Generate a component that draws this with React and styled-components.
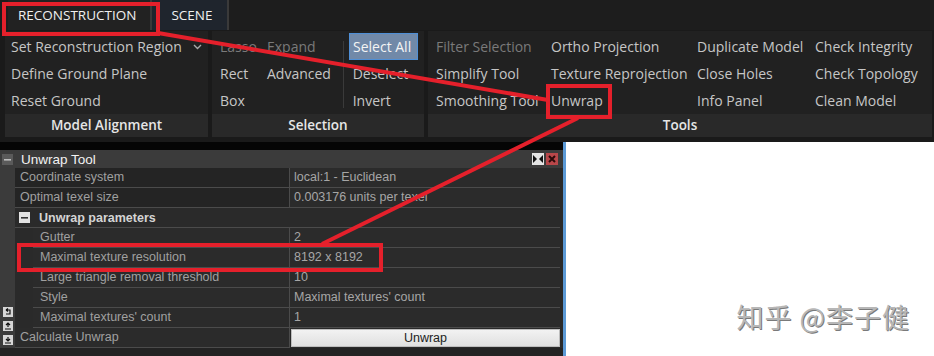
import React from "react";
import styled, { createGlobalStyle, css } from "styled-components";

const GlobalStyle = createGlobalStyle`
  html, body { margin: 0; padding: 0; background: #ffffff; }
  #root { width: 934px; height: 356px; }
`;

const Page = styled.div`
  position: relative;
  width: 934px;
  height: 356px;
  overflow: hidden;
  display: flex;
  flex-direction: column;
  background: #1b1b1b;
  font-family: "Open Sans", "Noto Sans", sans-serif;
`;

// ribbon

const Ribbon = styled.div`
  height: 142px;
  display: flex;
  flex-direction: column;
  background: #1a1a1a;
`;

const TabBar = styled.div`
  height: 30px;
  display: flex;
  padding-left: 8px;
  background: #1d1d1d;
`;

const Tab = styled.div`
  height: 30px;
  line-height: 30px;
  color: #f0f0f0;
  font-size: 13.5px;
  border-right: 2px solid #3a3a3a;
  ${(p) =>
    p.$active
      ? css`
          padding: 0 14px 0 10px;
          background: #222222;
        `
      : css`
          padding: 0 15px 0 19px;
          background: #1f252d;
        `}
`;

const Panels = styled.div`
  height: 106px;
  display: flex;
  gap: 4px;
  padding: 1px 0 0 5px;
`;

const Panel = styled.div`
  width: ${(p) => p.$w}px;
  display: flex;
  flex-direction: column;
  background: #212121;
`;

const PanelBody = styled.div`
  flex: 1;
  display: flex;
  padding: 2px 0 0 ${(p) => p.$pad || 6}px;
`;

const Column = styled.div`
  display: flex;
  flex-direction: column;
  width: ${(p) => (p.$w ? `${p.$w}px` : "auto")};
`;

const Item = styled.div`
  height: 27px;
  line-height: 27px;
  font-size: 14px;
  white-space: nowrap;
  color: ${(p) => (p.$dim ? "#7a7a7a" : "#c6c6c6")};
  display: flex;
  align-items: center;
  gap: 11px;
`;

const SelectAll = styled.div`
  height: 27px;
  box-sizing: border-box;
  line-height: 25px;
  padding: 0 3px;
  width: 69px;
  font-size: 14px;
  color: #f4f4f4;
  background: #7189a8;
  border: 1px solid #4f8fd6;
  white-space: nowrap;
`;

const Divider = styled.div`
  width: 1px;
  margin: 8px 5px 6px 0;
  background: #3a3a3a;
`;

const PanelLabel = styled.div`
  height: 23px;
  line-height: 23px;
  text-align: center;
  background: #292929;
  color: #e6e6e6;
  font-size: 13.5px;
  font-weight: 600;
`;

// lower part

const Lower = styled.div`
  flex: 1;
  display: flex;
`;

const Dock = styled.div`
  width: 563px;
  display: flex;
  flex-direction: column;
  border-top: 8px solid #050505;
  background: #232323;
`;

const DockBody = styled.div`
  display: flex;
  height: 198px;
`;

const Gutter = styled.div`
  width: 15px;
  background: #3b3b3b;
  display: flex;
  flex-direction: column;
  justify-content: space-between;
  align-items: center;
  padding: 4px 0 3px;
  box-sizing: border-box;
`;

const GutterIcons = styled.div`
  display: flex;
  flex-direction: column;
  gap: 4px;
`;

const Grid = styled.div`
  flex: 1;
  display: flex;
  flex-direction: column;
  padding-right: 3px;
  background: #2a2a2a;
  font-family: "Liberation Sans", Arial, sans-serif;
  font-size: 12.5px;
`;

const TitleBar = styled.div`
  height: 18px;
  margin-right: -3px;
  display: flex;
  align-items: center;
  justify-content: space-between;
  background: #3b3b3b;
  padding: 0 5px 0 6px;
  color: #f2f2f2;
  font-size: 13.5px;
`;

const TitleButtons = styled.div`
  display: flex;
  gap: 2px;
`;

const Row = styled.div`
  height: 20px;
  display: flex;
`;

const Indent = styled.div`
  width: ${(p) => p.$w}px;
  flex: none;
`;

const Label = styled.div`
  width: ${(p) => 275 - p.$indent}px;
  flex: none;
  box-sizing: border-box;
  padding-left: ${(p) => (p.$indent ? 7 : 5)}px;
  line-height: 19px;
  color: #a0a0a0;
  border-bottom: 1px solid #4b4b4b;
  border-right: 1px solid #4b4b4b;
  background: ${(p) => (p.$dark ? "#242424" : "#2b2b2b")};
  white-space: nowrap;
`;

const Value = styled.div`
  flex: 1;
  box-sizing: border-box;
  padding-left: 4px;
  line-height: 19px;
  color: #a6a6a6;
  border-bottom: 1px solid #4b4b4b;
  background: #2b2b2b;
  white-space: nowrap;
`;

const Category = styled.div`
  height: 20px;
  box-sizing: border-box;
  display: flex;
  align-items: center;
  gap: 9px;
  padding-left: 4px;
  border-bottom: 1px solid #4b4b4b;
  background: #2a2a2a;
  color: #d4d4d4;
  font-weight: bold;
`;

const Box = styled.div`
  width: ${(p) => p.$s || 10}px;
  height: ${(p) => p.$s || 10}px;
  background: ${(p) => p.$bg};
  display: flex;
  align-items: center;
  justify-content: center;
`;

const UnwrapButton = styled.div`
  flex: 1;
  margin: 1px 0 1px 1px;
  background: linear-gradient(#f2f2f2, #e0e0e0);
  border: 1px solid #bdbdbd;
  color: #222;
  text-align: center;
  line-height: 16px;
`;

const Canvas = styled.div`
  flex: 1;
  background: #ffffff;
  border-left: 3px solid #5c9ad6;
  display: flex;
  align-items: flex-end;
  justify-content: flex-end;
  padding: 0 24px 20px 0;
`;

const Watermark = styled.div`
  font-family: "Noto Sans CJK SC", "Noto Sans", sans-serif;
  font-size: 27px;
  color: #b7b7b7;
  text-shadow: 1px 1px 0 #7a7a7a;
  letter-spacing: 1px;
`;

const Overlay = styled.svg`
  position: absolute;
  left: 0;
  top: 0;
  pointer-events: none;
`;

const Chevron = () => (
  <svg width="9" height="6" viewBox="0 0 9 6">
    <path d="M1 1l3.5 3.5L8 1" stroke="#a8a8a8" strokeWidth="1.4" fill="none" />
  </svg>
);

const Minus = ({ bg, fg }) => (
  <Box $bg={bg} $s={11}>
    <svg width="7" height="7" viewBox="0 0 7 7">
      <rect x="0" y="3" width="7" height="1.6" fill={fg} />
    </svg>
  </Box>
);

const GutterIcon = ({ kind }) => (
  <Box $bg="#d6d6d6" $s={10}>
    <svg width="8" height="8" viewBox="0 0 8 8" fill="none" stroke="#111" strokeWidth="1.2">
      {kind === "undo" && <path d="M2 2h4v4H2M2 2l2-1.5M2 2l2 1.5" />}
      {kind === "up" && <path d="M4 5V1M2 3l2-2 2 2M1 7h6" />}
      {kind === "down" && <path d="M4 1v4M2 3l2 2 2-2M1 7h6" />}
    </svg>
  </Box>
);

const props = [
  { label: "Gutter", value: "2" },
  { label: "Maximal texture resolution", value: "8192 x 8192" },
  { label: "Large triangle removal threshold", value: "10" },
  { label: "Style", value: "Maximal textures' count" },
  { label: "Maximal textures' count", value: "1" },
];

export default function App() {
  return (
    <>
      <GlobalStyle />
      <Page>
        <Ribbon>
          <TabBar>
            <Tab $active>RECONSTRUCTION</Tab>
            <Tab>SCENE</Tab>
          </TabBar>
          <Panels>
            <Panel $w={203}>
              <PanelBody>
                <Column>
                  <Item>
                    Set Reconstruction Region <Chevron />
                  </Item>
                  <Item>Define Ground Plane</Item>
                  <Item>Reset Ground</Item>
                </Column>
              </PanelBody>
              <PanelLabel>Model Alignment</PanelLabel>
            </Panel>
            <Panel $w={212}>
              <PanelBody $pad={8}>
                <Column $w={47}>
                  <Item $dim>Lasso</Item>
                  <Item>Rect</Item>
                  <Item>Box</Item>
                </Column>
                <Column $w={76}>
                  <Item $dim>Expand</Item>
                  <Item>Advanced</Item>
                </Column>
                <Divider />
                <Column>
                  <SelectAll>Select All</SelectAll>
                  <Item>&nbsp;Deselect</Item>
                  <Item>&nbsp;Invert</Item>
                </Column>
              </PanelBody>
              <PanelLabel>Selection</PanelLabel>
            </Panel>
            <Panel $w={504}>
              <PanelBody $pad={8}>
                <Column $w={115}>
                  <Item $dim>Filter Selection</Item>
                  <Item>Simplify Tool</Item>
                  <Item>Smoothing Tool</Item>
                </Column>
                <Column $w={146}>
                  <Item>Ortho Projection</Item>
                  <Item>Texture Reprojection</Item>
                  <Item>Unwrap</Item>
                </Column>
                <Column $w={118}>
                  <Item>Duplicate Model</Item>
                  <Item>Close Holes</Item>
                  <Item>Info Panel</Item>
                </Column>
                <Column>
                  <Item>Check Integrity</Item>
                  <Item>Check Topology</Item>
                  <Item>Clean Model</Item>
                </Column>
              </PanelBody>
              <PanelLabel>Tools</PanelLabel>
            </Panel>
          </Panels>
        </Ribbon>

        <Lower>
          <Dock>
            <DockBody>
              <Gutter>
                <Minus bg="#5a5a5a" fg="#bdbdbd" />
                <GutterIcons>
                  <GutterIcon kind="undo" />
                  <GutterIcon kind="up" />
                  <GutterIcon kind="down" />
                </GutterIcons>
              </Gutter>
              <Grid>
                <TitleBar>
                  <span>Unwrap Tool</span>
                  <TitleButtons>
                    <Box $bg="#e4e4e4" $s={12}>
                      <svg width="10" height="8" viewBox="0 0 10 8">
                        <path d="M0 0l4 4-4 4zM10 0L6 4l4 4z" fill="#111" />
                      </svg>
                    </Box>
                    <Box $bg="#b8474a" $s={12}>
                      <svg width="8" height="8" viewBox="0 0 8 8">
                        <path d="M1 1l6 6M7 1L1 7" stroke="#2a0a0a" strokeWidth="2" />
                      </svg>
                    </Box>
                  </TitleButtons>
                </TitleBar>
                <Row>
                  <Label $indent={0} $dark>Coordinate system</Label>
                  <Value>local:1 - Euclidean</Value>
                </Row>
                <Row>
                  <Label $indent={0} $dark>Optimal texel size</Label>
                  <Value>0.003176 units per texel</Value>
                </Row>
                <Category>
                  <Minus bg="#e2e2e2" fg="#333" />
                  Unwrap parameters
                </Category>
                {props.map((p) => (
                  <Row key={p.label}>
                    <Indent $w={18} />
                    <Label $indent={18}>{p.label}</Label>
                    <Value>{p.value}</Value>
                  </Row>
                ))}
                <Row>
                  <Label $indent={0}>Calculate Unwrap</Label>
                  <UnwrapButton>Unwrap</UnwrapButton>
                </Row>
              </Grid>
            </DockBody>
          </Dock>
          <Canvas>
            <Watermark>知乎 @李子健</Watermark>
          </Canvas>
        </Lower>

        <Overlay width="934" height="356">
          <g stroke="#e5202b" strokeWidth="4" fill="none">
            <rect x="4" y="4" width="154" height="30" />
            <line x1="158" y1="33" x2="548" y2="100" />
            <rect x="548" y="86" width="62" height="31" />
            <line x1="578" y1="118" x2="322" y2="244" />
            <rect x="19" y="245" width="362" height="25" />
          </g>
        </Overlay>
      </Page>
    </>
  );
}
